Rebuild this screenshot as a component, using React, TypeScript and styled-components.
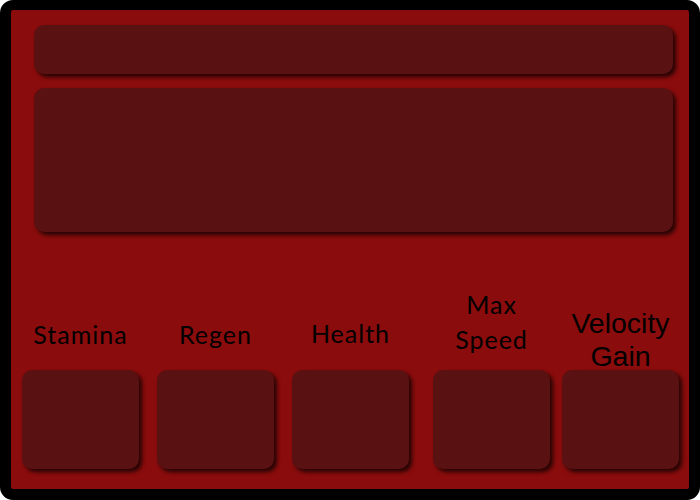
import React from "react";
import styled, { createGlobalStyle } from "styled-components";

const Global = createGlobalStyle`
  html, body { margin: 0; padding: 0; background: #ffffff; }
  * { box-sizing: border-box; }
`;

const Frame = styled.div`
  width: 700px;
  height: 500px;
  border-style: solid;
  border-color: #000000;
  border-width: 10px 11px 11px 11px;
  border-radius: 13px;
  background: #8b0c0c;
  display: flex;
  flex-direction: column;
  overflow: hidden;
`;

const Panel = styled.div<{ $h: number; $mt: number }>`
  margin: ${(p) => p.$mt}px 16px 0 23px;
  height: ${(p) => p.$h}px;
  background: #5a1112;
  border-radius: 10px;
  box-shadow: 3px 3px 4px rgba(0, 0, 0, 0.75);
  flex-shrink: 0;
`;

const StatRow = styled.div`
  margin-top: auto;
  padding: 0 0 20px 11px;
  display: flex;
  align-items: flex-end;
`;

const StatColumn = styled.div<{ $ml: number }>`
  width: 117px;
  margin-left: ${(p) => p.$ml}px;
  display: flex;
  flex-direction: column;
  align-items: center;
`;

const Label = styled.div<{ $gap: number; $arial?: boolean }>`
  font-family: ${(p) => (p.$arial ? '"Liberation Sans", Arial, sans-serif' : 'Lato, "Noto Sans", sans-serif')};
  font-size: ${(p) => (p.$arial ? 28.5 : 25)}px;
  line-height: ${(p) => (p.$arial ? 33 : 35)}px;
  letter-spacing: ${(p) => (p.$arial ? 0 : 1)}px;
  color: #000000;
  text-align: center;
  white-space: nowrap;
  margin-bottom: ${(p) => p.$gap}px;
`;

const StatBox = styled.div`
  width: 117px;
  height: 99px;
  background: #5a1112;
  border-radius: 10px;
  box-shadow: 3px 3px 4px rgba(0, 0, 0, 0.75);
`;

type Stat = { lines: string[]; ml: number; gap: number; arial?: boolean };

const stats: Stat[] = [
  { lines: ["Stamina"], ml: 0, gap: 18 },
  { lines: ["Regen"], ml: 18, gap: 18 },
  { lines: ["Health"], ml: 18, gap: 19 },
  { lines: ["Max", "Speed"], ml: 24, gap: 13 },
  { lines: ["Velocity", "Gain"], ml: 12, gap: -3, arial: true },
];

export default function App() {
  return (
    <>
      <Global />
      <Frame>
        <Panel $h={49} $mt={15} />
        <Panel $h={144} $mt={14} />
        <StatRow>
          {stats.map((s) => (
            <StatColumn key={s.lines.join(" ")} $ml={s.ml}>
              <Label $gap={s.gap} $arial={s.arial}>
                {s.lines.map((l) => (
                  <div key={l}>{l}</div>
                ))}
              </Label>
              <StatBox />
            </StatColumn>
          ))}
        </StatRow>
      </Frame>
    </>
  );
}
